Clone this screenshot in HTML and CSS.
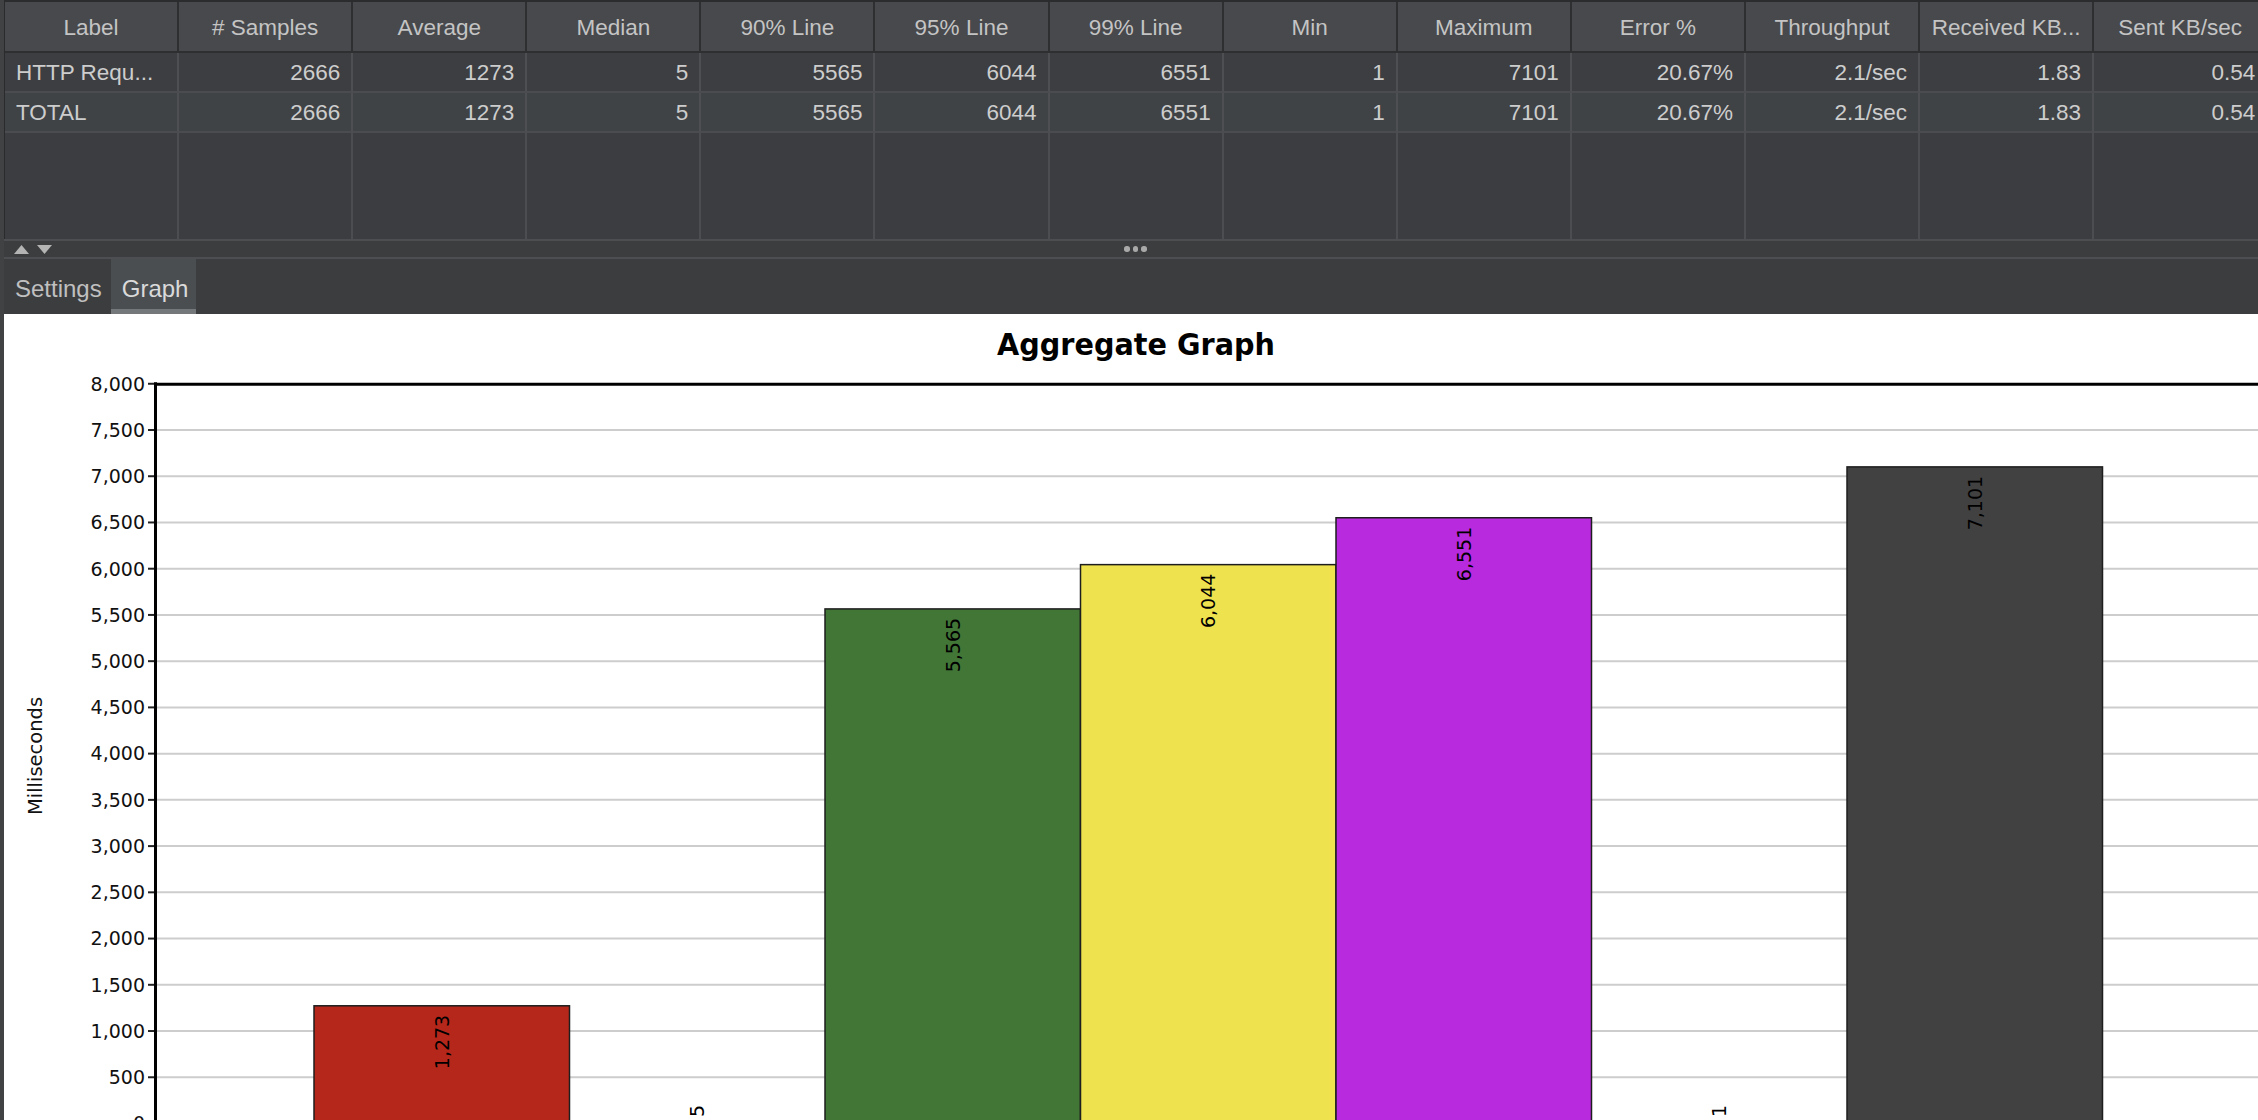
FILE: index.html
```html
<!DOCTYPE html>
<html lang="en">
<head>
<meta charset="utf-8">
<title>Aggregate Graph</title>
<link rel="stylesheet" href="styles.css">
</head>
<body>
<div class="app">
  <div class="results">
    <div class="row head">
      <div class="cell">Label</div>
      <div class="cell"># Samples</div>
      <div class="cell">Average</div>
      <div class="cell">Median</div>
      <div class="cell">90% Line</div>
      <div class="cell">95% Line</div>
      <div class="cell">99% Line</div>
      <div class="cell">Min</div>
      <div class="cell">Maximum</div>
      <div class="cell">Error %</div>
      <div class="cell">Throughput</div>
      <div class="cell">Received KB...</div>
      <div class="cell">Sent KB/sec</div>
    </div>
    <div class="row data">
      <div class="cell text">HTTP Requ...</div>
      <div class="cell">2666</div>
      <div class="cell">1273</div>
      <div class="cell">5</div>
      <div class="cell">5565</div>
      <div class="cell">6044</div>
      <div class="cell">6551</div>
      <div class="cell">1</div>
      <div class="cell">7101</div>
      <div class="cell">20.67%</div>
      <div class="cell">2.1/sec</div>
      <div class="cell">1.83</div>
      <div class="cell">0.54</div>
    </div>
    <div class="row data alt">
      <div class="cell text">TOTAL</div>
      <div class="cell">2666</div>
      <div class="cell">1273</div>
      <div class="cell">5</div>
      <div class="cell">5565</div>
      <div class="cell">6044</div>
      <div class="cell">6551</div>
      <div class="cell">1</div>
      <div class="cell">7101</div>
      <div class="cell">20.67%</div>
      <div class="cell">2.1/sec</div>
      <div class="cell">1.83</div>
      <div class="cell">0.54</div>
    </div>
    <div class="row filler">
      <div class="cell"></div><div class="cell"></div><div class="cell"></div><div class="cell"></div>
      <div class="cell"></div><div class="cell"></div><div class="cell"></div><div class="cell"></div>
      <div class="cell"></div><div class="cell"></div><div class="cell"></div><div class="cell"></div>
      <div class="cell"></div>
    </div>
  </div>

  <div class="splitter">
    <div class="arrows">
      <svg class="arrow" width="15" height="9" viewBox="0 0 15 9"><polygon points="7.5,0 15,9 0,9"/></svg>
      <svg class="arrow" width="15" height="9" viewBox="0 0 15 9"><polygon points="0,0 15,0 7.5,9"/></svg>
    </div>
    <div class="dots"><span></span><span></span><span></span></div>
  </div>

  <div class="tabs">
    <div class="tab">Settings</div>
    <div class="tab active">Graph</div>
  </div>

  <div class="chart">
    <svg class="chart-svg" width="2254" height="806" viewBox="4 314 2254 806">
      <text class="title" x="1136" y="355" text-anchor="middle" textLength="278" lengthAdjust="spacingAndGlyphs">Aggregate Graph</text>

      <text class="axis-label" transform="translate(42 756) rotate(-90)" text-anchor="middle">Milliseconds</text>

      <g class="grid">
        <line x1="157" x2="2258" y1="430.00" y2="430.00"/>
        <line x1="157" x2="2258" y1="476.23" y2="476.23"/>
        <line x1="157" x2="2258" y1="522.46" y2="522.46"/>
        <line x1="157" x2="2258" y1="568.70" y2="568.70"/>
        <line x1="157" x2="2258" y1="614.93" y2="614.93"/>
        <line x1="157" x2="2258" y1="661.17" y2="661.17"/>
        <line x1="157" x2="2258" y1="707.40" y2="707.40"/>
        <line x1="157" x2="2258" y1="753.63" y2="753.63"/>
        <line x1="157" x2="2258" y1="799.87" y2="799.87"/>
        <line x1="157" x2="2258" y1="846.10" y2="846.10"/>
        <line x1="157" x2="2258" y1="892.33" y2="892.33"/>
        <line x1="157" x2="2258" y1="938.57" y2="938.57"/>
        <line x1="157" x2="2258" y1="984.80" y2="984.80"/>
        <line x1="157" x2="2258" y1="1031.03" y2="1031.03"/>
        <line x1="157" x2="2258" y1="1077.27" y2="1077.27"/>
      </g>

      <g class="bars">
        <rect class="bar red" x="314" y="1005.79" width="255.5" height="130"/>
        <rect class="bar blue" x="569.5" y="1123.04" width="255.5" height="20"/>
        <rect class="bar green" x="825" y="608.92" width="255.5" height="530"/>
        <rect class="bar yellow" x="1080.5" y="564.63" width="255.5" height="570"/>
        <rect class="bar purple" x="1336" y="517.75" width="255.5" height="620"/>
        <rect class="bar orange" x="1591.5" y="1123.41" width="255.5" height="20"/>
        <rect class="bar grey" x="1847" y="466.89" width="255.5" height="670"/>
      </g>

      <g class="bar-labels">
        <text transform="translate(441.75 1014.8) rotate(-90)" text-anchor="end" dy="0.36em">1,273</text>
        <text transform="translate(697.25 1117) rotate(-90)" text-anchor="start" dy="0.36em">5</text>
        <text transform="translate(952.75 617.9) rotate(-90)" text-anchor="end" dy="0.36em">5,565</text>
        <text transform="translate(1208.25 573.6) rotate(-90)" text-anchor="end" dy="0.36em">6,044</text>
        <text transform="translate(1463.75 526.75) rotate(-90)" text-anchor="end" dy="0.36em">6,551</text>
        <text transform="translate(1719.25 1117) rotate(-90)" text-anchor="start" dy="0.36em">1</text>
        <text transform="translate(1974.75 475.9) rotate(-90)" text-anchor="end" dy="0.36em">7,101</text>
      </g>

      <g class="ticks">
        <line x1="148" x2="154" y1="383.76" y2="383.76"/>
        <line x1="148" x2="154" y1="430.00" y2="430.00"/>
        <line x1="148" x2="154" y1="476.23" y2="476.23"/>
        <line x1="148" x2="154" y1="522.46" y2="522.46"/>
        <line x1="148" x2="154" y1="568.70" y2="568.70"/>
        <line x1="148" x2="154" y1="614.93" y2="614.93"/>
        <line x1="148" x2="154" y1="661.17" y2="661.17"/>
        <line x1="148" x2="154" y1="707.40" y2="707.40"/>
        <line x1="148" x2="154" y1="753.63" y2="753.63"/>
        <line x1="148" x2="154" y1="799.87" y2="799.87"/>
        <line x1="148" x2="154" y1="846.10" y2="846.10"/>
        <line x1="148" x2="154" y1="892.33" y2="892.33"/>
        <line x1="148" x2="154" y1="938.57" y2="938.57"/>
        <line x1="148" x2="154" y1="984.80" y2="984.80"/>
        <line x1="148" x2="154" y1="1031.03" y2="1031.03"/>
        <line x1="148" x2="154" y1="1077.27" y2="1077.27"/>
        <line x1="148" x2="154" y1="1123.50" y2="1123.50"/>
      </g>

      <g class="tick-labels">
        <text x="145" y="383.76" dy="0.36em" text-anchor="end">8,000</text>
        <text x="145" y="430.00" dy="0.36em" text-anchor="end">7,500</text>
        <text x="145" y="476.23" dy="0.36em" text-anchor="end">7,000</text>
        <text x="145" y="522.46" dy="0.36em" text-anchor="end">6,500</text>
        <text x="145" y="568.70" dy="0.36em" text-anchor="end">6,000</text>
        <text x="145" y="614.93" dy="0.36em" text-anchor="end">5,500</text>
        <text x="145" y="661.17" dy="0.36em" text-anchor="end">5,000</text>
        <text x="145" y="707.40" dy="0.36em" text-anchor="end">4,500</text>
        <text x="145" y="753.63" dy="0.36em" text-anchor="end">4,000</text>
        <text x="145" y="799.87" dy="0.36em" text-anchor="end">3,500</text>
        <text x="145" y="846.10" dy="0.36em" text-anchor="end">3,000</text>
        <text x="145" y="892.33" dy="0.36em" text-anchor="end">2,500</text>
        <text x="145" y="938.57" dy="0.36em" text-anchor="end">2,000</text>
        <text x="145" y="984.80" dy="0.36em" text-anchor="end">1,500</text>
        <text x="145" y="1031.03" dy="0.36em" text-anchor="end">1,000</text>
        <text x="145" y="1077.27" dy="0.36em" text-anchor="end">500</text>
        <text x="145" y="1123.50" dy="0.36em" text-anchor="end">0</text>
      </g>

      <g class="axes">
        <line x1="155.5" x2="155.5" y1="382.3" y2="1130"/>
        <line x1="154" x2="2270" y1="384.3" y2="384.3"/>
      </g>
    </svg>
  </div>
</div>
</body>
</html>
```

FILE: styles.css
```css
html, body {
  margin: 0;
  padding: 0;
}

body {
  width: 2258px;
  height: 1120px;
  overflow: hidden;
  background: #3d3e40;
  font-family: "Liberation Sans", Arial, sans-serif;
}

.app {
  display: flex;
  flex-direction: column;
  height: 1120px;
  padding-left: 4px;
  background: #414243;
  overflow: hidden;
}

/* ---------- results table ---------- */
.results {
  border-left: 1px solid #2a2b2c;
  border-top: 2px solid #2b2c2d;
  background: #3c3d40;
  overflow: hidden;
}

.row {
  display: grid;
  grid-template-columns: repeat(13, 174.1px);
}

.cell {
  box-sizing: border-box;
  border-right: 2px solid #4d4f52;
  padding: 0 11px;
  white-space: nowrap;
  overflow: hidden;
  text-align: right;
  font-size: 22.5px;
  color: #cdcdcd;
}

.head .cell {
  height: 51px;
  padding: 3px 0 0;
  line-height: 46px;
  text-align: center;
  color: #c4c4c4;
  background: #47494c;
  border-right-color: #2e2f31;
  border-bottom: 2px solid #2e2f31;
}

.data .cell {
  height: 40px;
  padding-top: 2px;
  line-height: 36px;
  background: #3d3e41;
  border-bottom: 2px solid #4a4c4f;
}

.data.alt .cell {
  background: #404346;
}

.data .cell.text {
  text-align: left;
}

.filler .cell {
  height: 106px;
  background: #3c3d40;
  border-right: 2px solid #4b4d50;
}

/* ---------- splitter ---------- */
.splitter {
  display: flex;
  align-items: center;
  height: 16px;
  background: #3c3d3f;
  border-top: 2px solid #4c4e51;
  border-bottom: 2px solid #4c4e51;
}

.arrows {
  display: flex;
  gap: 8px;
  padding-left: 10px;
}

.arrow {
  display: block;
  fill: #b4b4b4;
}

.dots {
  display: flex;
  gap: 3px;
  margin-left: 1072px;
}

.dots span {
  width: 5.5px;
  height: 5.5px;
  border-radius: 50%;
  background: #a9a9a9;
}

/* ---------- tabs ---------- */
.tabs {
  display: flex;
  height: 55px;
  background: #3c3d3f;
}

.tab {
  box-sizing: border-box;
  height: 55px;
  padding: 8px 9px 0 11px;
  line-height: 42px;
  font-size: 24px;
  color: #c0c0c0;
  border-top: 1px solid transparent;
  border-bottom: 5px solid transparent;
}

.tab.active {
  padding-right: 8px;
  background: #4b4e51;
  color: #dadada;
  border-bottom-color: #74787b;
}

/* ---------- chart ---------- */
.chart {
  flex: 1;
  background: #ffffff;
  overflow: hidden;
}

.chart-svg {
  display: block;
  font-family: "DejaVu Sans", "Liberation Sans", sans-serif;
}

.title {
  font-size: 30px;
  font-weight: bold;
  fill: #000000;
}

.axis-label {
  font-size: 19.5px;
  fill: #111111;
}

.grid line {
  stroke: #cdcdcd;
  stroke-width: 2;
}

.ticks line {
  stroke: #222222;
  stroke-width: 2;
}

.tick-labels text {
  font-size: 19px;
  fill: #111111;
}

.axes line {
  stroke: #000000;
  stroke-width: 3;
}

.bar {
  stroke: #1e1e1e;
  stroke-width: 1.5;
}

.bar.red { fill: #b6271b; }
.bar.blue { fill: #2b4fb5; }
.bar.green { fill: #427637; }
.bar.yellow { fill: #efe24f; }
.bar.purple { fill: #b82ade; }
.bar.orange { fill: #e08a20; }
.bar.grey { fill: #414141; }

.bar-labels text {
  font-size: 19px;
  fill: #000000;
}
```
